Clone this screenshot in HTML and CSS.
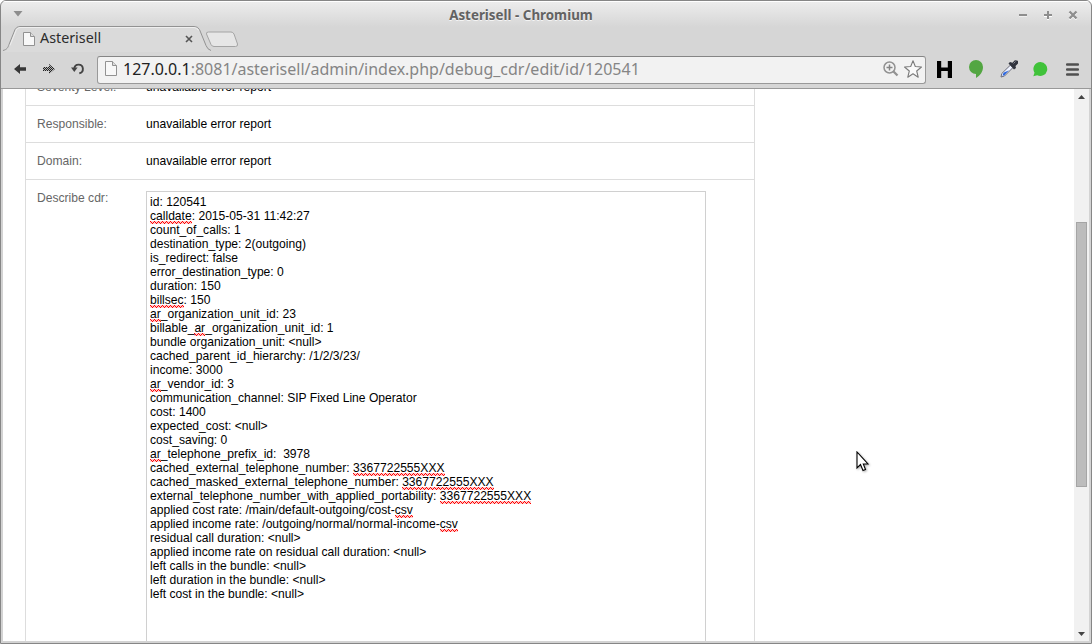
FILE: index.html
```html
<!DOCTYPE html>
<html lang="en">
<head>
<meta charset="utf-8">
<title>Asterisell</title>
<link rel="stylesheet" href="styles.css">
</head>
<body>
<div class="window">
  <header class="titlebar">
    <svg class="win-menu" width="10" height="6" viewBox="0 0 10 6"><path d="M0.5 0h9L5 5.5z" fill="#8e8e8e"/></svg>
    <h1 class="win-title">Asterisell - Chromium</h1>
    <div class="win-buttons">
      <svg width="10" height="10" viewBox="0 0 10 10"><path d="M1 6h8" stroke="#fff"/><path d="M1 5h8" stroke="#8e8e8e" stroke-width="2"/></svg>
      <svg width="10" height="10" viewBox="0 0 10 10"><path d="M1 6h8M5 2v8" stroke="#fff" stroke-width="2"/><path d="M1 5h8M5 1v8" stroke="#8e8e8e" stroke-width="2"/></svg>
      <svg width="10" height="10" viewBox="0 0 10 10"><path d="M1.5 2.500l7 7m0-7l-7 7" stroke="#fff" stroke-width="2"/><path d="M1.500 1.500l7 7m0-7l-7 7" stroke="#8e8e8e" stroke-width="2.400"/></svg>
    </div>
  </header>
  <nav class="tabstrip">
    <div class="tab">
      <svg class="tab-shape" width="208" height="26" viewBox="0 0 208 26"><path d="M0 25C4 24 5 22 6 19L12 4Q13.500 1 17 1H191Q195 1 196.500 4L203 20Q204.500 24 208 25V26H0z" fill="#dadada"/><path d="M0 24.500C4 23.500 5 21.500 6 18.500L12 3.500Q13.500 .5 17 .5H191Q195 .5 196.500 3.500L203 19.500Q204.500 23.500 208 24.500" fill="none" stroke="#929292"/><path d="M7 19.500L13 4.500Q14 1.500 17 1.500H191Q194 1.500 195.500 4.500" fill="none" stroke="#efefef"/></svg>
      <svg class="page-icon" width="12" height="14" viewBox="0 0 12 14"><path d="M.5.500h7l4 4v9H.5z" fill="#f8f8f8" stroke="#929292"/><path d="M7.500.500v4h4" fill="#ddd" stroke="#929292"/></svg>
      <span class="tab-label">Asterisell</span>
      <svg class="tab-close" width="8" height="8" viewBox="0 0 8 8"><path d="M1 1l6 6m0-6l-6 6" stroke="#555" stroke-width="1.600"/></svg>
    </div>
    <svg class="new-tab" width="34" height="17" viewBox="0 0 34 17"><path d="M3.500 1H26Q28 1 29 3L32.500 13Q33 15.500 30.500 15.500H9Q7 15.500 6 13.500L1.500 3Q1 1 3.500 1z" fill="#e6e6e6" stroke="#a4a4a4"/></svg>
  </nav>
  <div class="toolbar">
    <svg class="back" width="12" height="10" viewBox="0 0 12 10"><path d="M0 5L6 0v3.300h6v3.400H6V10z" fill="#373737"/></svg>
    <svg class="forward" width="12" height="10" viewBox="0 0 12 10"><defs><pattern id="dots" width="2" height="2" patternUnits="userSpaceOnUse"><path d="M0 0h1v1H0zM1 1h1v1H1z" fill="#222"/></pattern></defs><path d="M12 5L6 0v3H0v4h6v3z" fill="#b4b4b4"/><path d="M12 5L6 0v3H0v4h6v3z" fill="url(#dots)"/></svg>
    <svg class="reload" width="14" height="12" viewBox="0 0 14 12"><path d="M3.300 5.500A4.300 4.300 0 1 1 8.300 10.200" fill="none" stroke="#444" stroke-width="1.900"/><path d="M0 4.500h6.600L3.300 9z" fill="#444"/></svg>
    <div class="omnibox">
      <svg class="page-icon" width="12" height="15" viewBox="0 0 12 15"><path d="M.5.500h7l4 4v10H.5z" fill="#f8f8f8" stroke="#929292"/><path d="M7.500.500v4h4" fill="#ddd" stroke="#929292"/></svg>
      <span class="url"><b class="host">127.0.0.1</b>:8081/asterisell/admin/index.php/debug_cdr/edit/id/120541</span>
      <svg class="zoom-icon" width="16" height="16" viewBox="0 0 16 16"><circle cx="6.500" cy="6.500" r="5.500" fill="none" stroke="#929292" stroke-width="1.500"/><path d="M3.500 6.500h6M6.500 3.500v6" stroke="#858585" stroke-width="1.500"/><path d="M10.500 10.500l4 4" stroke="#929292" stroke-width="2.300"/></svg>
      <svg class="star" width="18" height="18" viewBox="0 0 18 18"><path d="M9 .8l2.300 5.700 6.200.5-4.800 4 1.500 6.200L9 13.800l-5.200 3.400 1.500-6.200L.5 7l6.200-.5z" fill="#fafafa" stroke="#7b7b7b" stroke-width="1.100" stroke-linejoin="round"/></svg>
    </div>
    <svg class="ext-h" width="15" height="17" viewBox="0 0 15 17"><path d="M0 0h4.200v6.500h6.600V0H15v17h-4.200V10H4.200v7H0z" fill="#000"/></svg>
    <svg class="ext-pin" width="14" height="18" viewBox="0 0 14 18"><path d="M7 0a7 7 0 0 1 7 7c0 5-3 8.500-7 11v-4A7 7 0 0 1 7 0z" fill="#53a642"/></svg>
    <svg class="ext-pick" width="18" height="18" viewBox="0 0 18 18"><path d="M1 17l.8-3.500L10.500 5l2.500 2.500L4.500 16z" fill="#eef3ff" stroke="#6b6b78"/><path d="M2.500 15.700l1-3 5.500-2.500-4.600 5z" fill="#2965df"/><path d="M8.500 3.500l1.500-1.500 2.500.7L14.500.5Q16 0 18 1V3.500L15.500 6l.5 2-2 1.500z" fill="#30333d"/><path d="M13.500 3.500l2-2" stroke="#858995"/></svg>
    <svg class="ext-chat" width="15" height="15" viewBox="0 0 15 15"><path d="M7.500 0a7 7 0 1 1-3.300 13.300L.3 14.300 1.500 10.700A7 7 0 0 1 7.500 0z" fill="#40c23a"/></svg>
    <svg class="menu" width="13" height="13" viewBox="0 0 13 13"><path d="M1 1.500h11M1 6.500h11M1 11.500h11" stroke="#505050" stroke-width="2.500" stroke-linecap="round"/></svg>
  </div>
  <div class="viewport">
    <main class="page">
      <div class="form">
        <div class="row"><span class="label">Severity Level:</span><span class="value">unavailable error report</span></div>
        <div class="row"><span class="label">Responsible:</span><span class="value">unavailable error report</span></div>
        <div class="row"><span class="label">Domain:</span><span class="value">unavailable error report</span></div>
        <div class="row row-cdr"><span class="label">Describe cdr:</span>
<div class="cdr">id: 120541
<span class="sp">calldate</span>: 2015-05-31 11:42:27
count_of_calls: 1
destination_type: 2(outgoing)
is_redirect: false
error_destination_type: 0
duration: 150
<span class="sp">billsec</span>: 150
<span class="sp">ar</span>_organization_unit_id: 23
billable_<span class="sp">ar</span>_organization_unit_id: 1
bundle organization_unit: &lt;null&gt;
cached_parent_id_hierarchy: /1/2/3/23/
income: 3000
<span class="sp">ar</span>_vendor_id: 3
communication_channel: SIP Fixed Line Operator
cost: 1400
expected_cost: &lt;null&gt;
cost_saving: 0
<span class="sp">ar</span>_telephone_prefix_id:  3978
cached_external_telephone_number: <span class="sp">3367722555XXX</span>
cached_masked_external_telephone_number: <span class="sp">3367722555XXX</span>
external_telephone_number_with_applied_portability: <span class="sp">3367722555XXX</span>
applied cost rate: /main/default-outgoing/cost-<span class="sp">csv</span>
applied income rate: /outgoing/normal/normal-income-<span class="sp">csv</span>
residual call duration: &lt;null&gt;
applied income rate on residual call duration: &lt;null&gt;
left calls in the bundle: &lt;null&gt;
left duration in the bundle: &lt;null&gt;
left cost in the bundle: &lt;null&gt;</div></div>
      </div>
    </main>
    <div class="scrollbar">
      <svg class="arrow" width="7" height="4" viewBox="0 0 7 4"><path d="M3.500 0L7 4H0z" fill="#444"/></svg>
      <div class="track"><div class="thumb"></div></div>
      <svg class="arrow" width="7" height="4" viewBox="0 0 7 4"><path d="M3.500 4L7 0H0z" fill="#444"/></svg>
    </div>
  </div>
  <svg class="pointer" width="14" height="21" viewBox="0 0 14 21"><path d="M1 1v16l3.500-3.500L7 19.500l2.500-1L7.300 13H12z" fill="#fff" stroke="#000" stroke-width="1.100"/></svg>
</div>
</body>
</html>
```
FILE: styles.css
```css
* { box-sizing: border-box; }
svg { display: block; flex: none; }
body { margin: 0; background: #fff; font: 12.1px/14px "Liberation Sans", Arial, sans-serif; }

.window {
  position: relative;
  display: flex;
  flex-direction: column;
  width: 1092px;
  height: 644px;
  overflow: hidden;
  border: 1px solid #868686;
  border-radius: 6px 6px 0 0;
  background: linear-gradient(#ededed, #d6d6d6 26px);
}

.titlebar { display: flex; align-items: center; height: 25px; padding: 0 13px 0 12px; border-top: 1px solid #fff; }
.win-menu { margin-top: -1px; }
.win-title {
  flex: 1;
  margin: 1px 0 0 0;
  padding-left: 1px;
  text-align: center;
  font: bold 13.330px/20px "Noto Sans", sans-serif;
  letter-spacing: 0.020px;
  color: #626262;
  text-shadow: 0 1px 0 #f4f4f4;
}
.win-buttons { display: flex; gap: 15px; margin-top: 1px; }

.tabstrip { display: flex; height: 26px; padding-left: 2px; }
.tab { position: relative; display: flex; align-items: center; width: 207px; height: 26px; padding: 0 17px 1px 20px; }
.tab-shape { position: absolute; left: 0; top: 0; }
.tab .page-icon, .tab-close { position: relative; }
.tab-label { position: relative; flex: 1; margin: -2px 0 0 5px; font: 14.3px/20px "Noto Sans", sans-serif; color: #2c2c2c; }
.tab-close { margin-top: 1px; }
.new-tab { margin: 5px 0 0 -5px; }

.toolbar { display: flex; align-items: center; height: 37px; padding: 0 12px 2px 13px; border-bottom: 1px solid #999; background: #d6d6d6; }
.forward { margin-left: 17px; }
.reload { margin-left: 16px; }
.omnibox {
  display: flex;
  align-items: center;
  width: 829px;
  height: 28px;
  margin: 1px 0 0 12px;
  padding: 0 3px 2px 7px;
  border: 1px solid #999;
  border-top: 1px solid #858585;
  border-radius: 3px;
  background: #f2f2f2;
}
.url { flex: 1; margin-left: 6px; font: 16px/24px "Noto Sans", sans-serif; letter-spacing: -0.010px; color: #858585; white-space: nowrap; }
.host { font-weight: 400; color: #222; }
.star { margin-left: 5px; }
.ext-h { margin-left: 11px; }
.ext-pin { margin-left: 17px; }
.ext-pick { margin-left: 17px; }
.ext-chat { margin-left: 15px; }
.menu { margin-left: 18px; }

.viewport { display: flex; flex: 1; min-height: 0; border: solid #d3d3d3; border-width: 0 2px 2px; }
.page { flex: 1; overflow: hidden; background: #fff; }
.form { width: 730px; height: 600px; margin: -20px 0 0 22px; border: solid #ddd; border-width: 0 1px; }
.row { display: flex; height: 37px; padding: 11px 0 0 11px; border-bottom: 1px solid #ddd; }
.row-cdr { height: auto; }
.label { width: 109px; color: #666; }
.cdr { width: 560px; height: 480px; padding: 3px; border: 1px solid #d0d0d0; white-space: pre; background: #fff; }
.sp {
  padding-bottom: 1px;
  background: url("data:image/svg+xml,%3Csvg xmlns='http://www.w3.org/2000/svg' width='4' height='3'%3E%3Cpath d='M0 0h4v3H0z' fill='%23f00' opacity='.2'/%3E%3Cpath d='M0 0h1v1H0zM2 2h1v1H2zM1 1h1v1H1zM3 1h1v1H3z' fill='%23f00'/%3E%3C/svg%3E") left bottom repeat-x;
}

.scrollbar { display: flex; flex-direction: column; align-items: center; width: 15px; padding: 6px 0 5px; background: #f1f1f1; }
.track { flex: 1; align-self: stretch; padding: 123px 2px 0; }
.thumb { height: 265px; border: 1px solid #a5a5a5; background: #bcbcbc; }

.pointer { position: absolute; left: 855px; top: 450px; filter: drop-shadow(1px 1px 1px #0005); }
```
